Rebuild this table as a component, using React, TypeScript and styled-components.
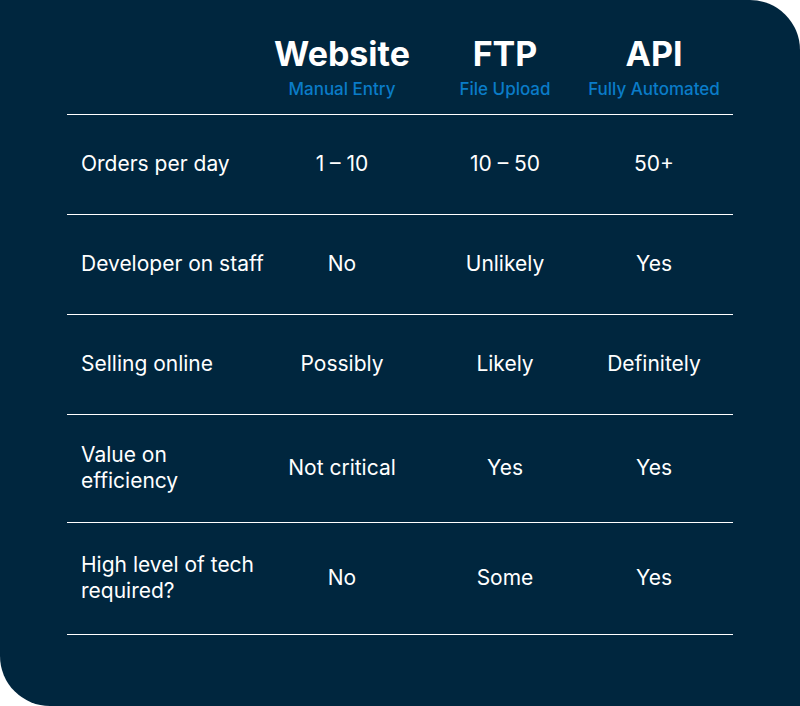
import React from "react";
import styled, { createGlobalStyle } from "styled-components";

const Global = createGlobalStyle`
  html, body { margin: 0; padding: 0; background: #ffffff; }
  body { font-family: Inter, "Noto Sans", sans-serif; }
`;

const Card = styled.div`
  width: 800px;
  height: 706px;
  box-sizing: border-box;
  background: #00263e;
  border-radius: 0 50px 0 50px;
  padding: 0 67px;
  color: #ffffff;
  font-family: Inter, "Noto Sans", sans-serif;
`;

const Grid = styled.div`
  display: grid;
  grid-template-columns: 182px 186px 140px 158px;
`;

const HeaderRow = styled(Grid)`
  height: 114px;
  box-sizing: border-box;
  padding-top: 35px;
`;

const HeadCell = styled.div`
  display: flex;
  flex-direction: column;
  align-items: center;
  white-space: nowrap;
`;

const Title = styled.div`
  font-size: 34px;
  line-height: 38px;
  font-weight: 700;
  color: #ffffff;
`;

const Subtitle = styled.div`
  margin-top: 6px;
  font-size: 17px;
  line-height: 20px;
  font-weight: 500;
  color: #0a7cc8;
`;

const Body = styled.div`
  border-bottom: 1px solid #ffffff;
`;

const Row = styled(Grid)<{ $h: number }>`
  height: ${(p) => p.$h}px;
  box-sizing: border-box;
  border-top: 1px solid #ffffff;
  padding-bottom: 2px;
  align-items: center;
  font-size: 21px;
  line-height: 26px;
`;

const Label = styled.div`
  padding-left: 14px;
  white-space: nowrap;
`;

const Value = styled.div`
  text-align: center;
  white-space: nowrap;
`;

const heads = [
  { t: "Website", s: "Manual Entry" },
  { t: "FTP", s: "File Upload" },
  { t: "API", s: "Fully Automated" },
];

const rows: { label: React.ReactNode; values: string[]; h: number }[] = [
  { label: "Orders per day", values: ["1 – 10", "10 – 50", "50+"], h: 100 },
  { label: "Developer on staff", values: ["No", "Unlikely", "Yes"], h: 100 },
  { label: "Selling online", values: ["Possibly", "Likely", "Definitely"], h: 100 },
  {
    label: (
      <>
        Value on
        <br />
        efficiency
      </>
    ),
    values: ["Not critical", "Yes", "Yes"],
    h: 108,
  },
  {
    label: (
      <>
        High level of tech
        <br />
        required?
      </>
    ),
    values: ["No", "Some", "Yes"],
    h: 112,
  },
];

export default function App() {
  return (
    <>
      <Global />
      <Card>
        <HeaderRow>
          <div />
          {heads.map((h) => (
            <HeadCell key={h.t}>
              <Title>{h.t}</Title>
              <Subtitle>{h.s}</Subtitle>
            </HeadCell>
          ))}
        </HeaderRow>
        <Body>
          {rows.map((r, i) => (
            <Row key={i} $h={r.h}>
              <Label>{r.label}</Label>
              {r.values.map((v, j) => (
                <Value key={j}>{v}</Value>
              ))}
            </Row>
          ))}
        </Body>
      </Card>
    </>
  );
}
